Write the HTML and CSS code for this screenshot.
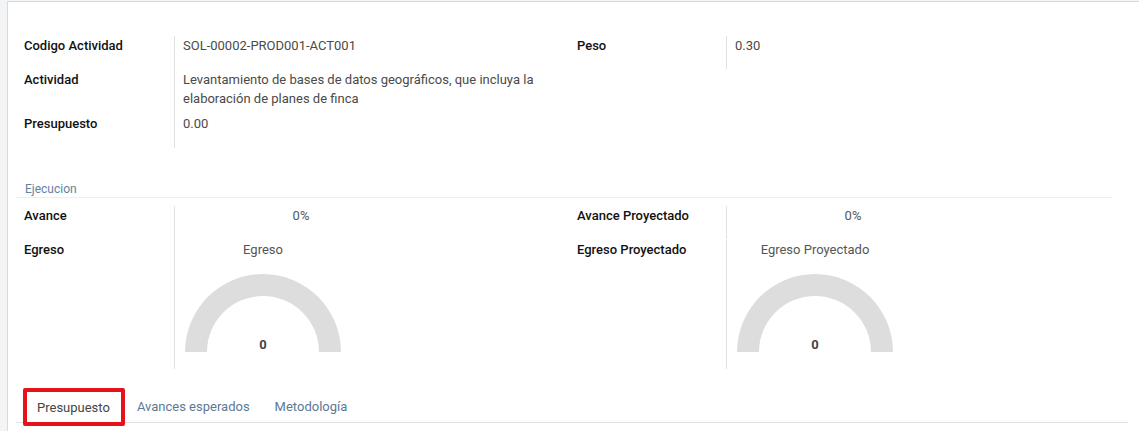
FILE: index.html
```html
<!DOCTYPE html>
<html lang="es">
<head>
<meta charset="utf-8">
<title>Actividad</title>
<link rel="stylesheet" href="styles.css">
</head>
<body>
<div class="sheet">
  <div class="groups">
    <div class="group">
      <div class="row">
        <div class="label">Codigo Actividad</div>
        <div class="value">SOL-00002-PROD001-ACT001</div>
      </div>
      <div class="row">
        <div class="label">Actividad</div>
        <div class="value multi">Levantamiento de bases de datos geográficos, que incluya la elaboración de planes de finca</div>
      </div>
      <div class="row">
        <div class="label">Presupuesto</div>
        <div class="value">0.00</div>
      </div>
    </div>
    <div class="group">
      <div class="row">
        <div class="label">Peso</div>
        <div class="value">0.30</div>
      </div>
    </div>
  </div>

  <div class="separator">Ejecucion</div>

  <div class="groups exec">
    <div class="group">
      <div class="row">
        <div class="label">Avance</div>
        <div class="value"><div class="percent">0%</div></div>
      </div>
      <div class="row">
        <div class="label">Egreso</div>
        <div class="value">
          <div class="gauge">
            <div class="gauge-title">Egreso</div>
            <svg class="gauge-svg" width="160" height="99" viewBox="0 0 160 99">
              <path d="M2 82 A78 78 0 0 1 158 82 L136 82 A56 56 0 0 0 24 82 Z" fill="#dddddd"/>
              <text x="80" y="79" text-anchor="middle" class="gauge-num">0</text>
            </svg>
          </div>
        </div>
      </div>
    </div>
    <div class="group">
      <div class="row">
        <div class="label">Avance Proyectado</div>
        <div class="value"><div class="percent">0%</div></div>
      </div>
      <div class="row">
        <div class="label">Egreso Proyectado</div>
        <div class="value">
          <div class="gauge">
            <div class="gauge-title">Egreso Proyectado</div>
            <svg class="gauge-svg" width="160" height="99" viewBox="0 0 160 99">
              <path d="M2 82 A78 78 0 0 1 158 82 L136 82 A56 56 0 0 0 24 82 Z" fill="#dddddd"/>
              <text x="80" y="79" text-anchor="middle" class="gauge-num">0</text>
            </svg>
          </div>
        </div>
      </div>
    </div>
  </div>

  <ul class="tabs">
    <li class="tab active">Presupuesto</li>
    <li class="tab">Avances esperados</li>
    <li class="tab">Metodología</li>
  </ul>
</div>
</body>
</html>
```

FILE: styles.css
```css
html, body {
  margin: 0;
  padding: 0;
}
body {
  background: #f3f4f6;
  font-family: Roboto, "Liberation Sans", sans-serif;
  font-size: 13px;
  color: #212529;
  overflow: hidden;
  height: 431px;
}
.sheet {
  margin: 1px 0 0 7px;
  width: 1160px;
  min-height: 440px;
  background: #ffffff;
  border-top: 1px solid #d8dadf;
  border-left: 1px solid #d8dadf;
  padding: 34px 0 0 8px;
  box-sizing: border-box;
}
.groups {
  display: grid;
  grid-template-columns: 552px 552px;
}
.group {
  display: flex;
  flex-direction: column;
}
.row {
  display: grid;
  grid-template-columns: 158px 1fr;
  line-height: 20px;
}
.label {
  padding-left: 8px;
  font-weight: 500;
  color: #111;
  min-height: 34px;
}
.value {
  border-left: 1px solid #dee2e6;
  padding-left: 8px;
  padding-right: 4px;
  color: #4a4a4a;
}
.value.multi {
  line-height: 19px;
  padding-bottom: 6px;
}
.group:nth-child(2) .label {
  padding-left: 9px;
}
.group:nth-child(2) .value {
  padding-left: 8px;
}
.group:nth-child(2) .row:first-child .value {
  height: 33px;
  box-sizing: border-box;
}
.separator {
  margin-top: 33px;
  width: 1096px;
  padding-left: 9px;
  box-sizing: border-box;
  font-size: 12px;
  line-height: 16px;
  color: #6382a2;
  border-bottom: 1px solid #eceef0;
}
.exec {
  margin-top: 8px;
}
.percent {
  width: 236px;
  text-align: center;
  color: #555;
}
.gauge {
  width: 160px;
  display: flex;
  flex-direction: column;
  align-items: center;
}
.gauge-title {
  color: #555;
  line-height: 20px;
}
.gauge-svg {
  display: block;
  margin-top: 10px;
}
.gauge-num {
  font-family: Roboto, "Liberation Sans", sans-serif;
  font-size: 13px;
  font-weight: 700;
  fill: #444;
}
.tabs {
  list-style: none;
  margin: 19px 0 0 0;
  padding: 0 0 0 7px;
  width: 1112px;
  box-sizing: border-box;
  display: flex;
  height: 35px;
  border-bottom: 1px solid #dee2e6;
}
.tab {
  height: 34px;
  line-height: 37px;
  padding: 0 13px 0 12px;
  color: #5e7894;
}
.tab.active {
  height: 38px;
  line-height: 32px;
  box-sizing: border-box;
  border: 4px solid #e5121b;
  border-radius: 2px;
  padding: 0 11px 0 10px;
  color: #444;
  background: #fff;
}
```
